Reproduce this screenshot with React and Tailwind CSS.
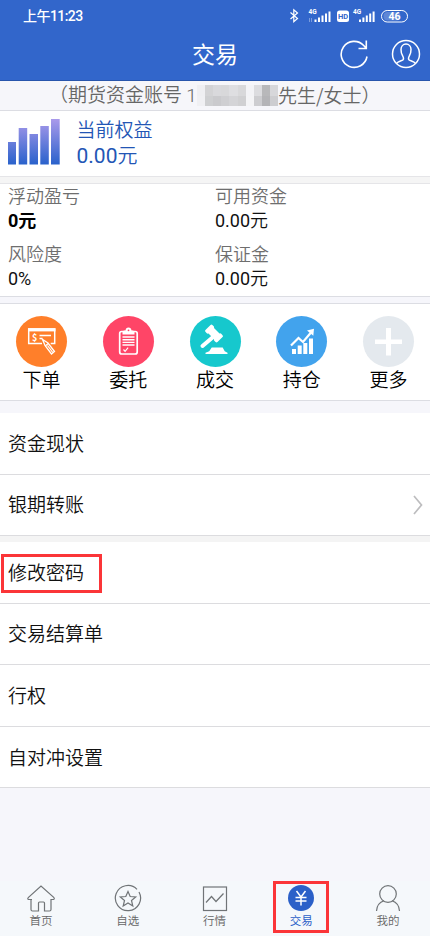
import React from "react";

function StatusBar() {
  return (
    <div className="flex h-[31px] items-center justify-between pl-[23px] pr-[21px] text-white">
      <span className="pb-px text-[14px] font-medium leading-none tracking-[-0.500px] whitespace-nowrap">上午<span className="font-[Roboto] text-[14px] tracking-[-0.600px]">11:23</span></span>
      <svg width="120" height="20" viewBox="0 0 120 20" fill="none" stroke="#fff">
        <path d="M1.500 6.500l7 6-3.700 3.200V3.800l3.700 3.200-7 6" strokeWidth="1.200" />
        <g stroke="none" fill="#fff">
          <path d="M25.500 13.500h2V16h-2zM29 11.500h2V16h-2zM32.500 9.500h2V16h-2zM36 7.500h2V16h-2zM39.500 5.500h2V16h-2z" />
          <path d="M70 13.500h2V16h-2zM73.400 11.500h2V16h-2zM76.800 9.500h2V16h-2zM80.200 7.500h2V16h-2zM83.600 5.500h2V16h-2z" />
          <rect x="48" y="4.500" width="12" height="11.500" rx="2.500" />
          <text x="19.500" y="7.500" fontSize="6.500" fontWeight="700" fontFamily="Roboto">4G</text>
          <text x="64" y="7.500" fontSize="6.500" fontWeight="700" fontFamily="Roboto">4G</text>
          <text x="49" y="13" fontSize="7.500" fontWeight="700" fontFamily="Roboto" fill="#3266cb">HD</text>
        </g>
        <path d="M20.500 12v4M22.500 12v4" strokeWidth=".7" opacity=".5" />
        <rect x="92.500" y="4.500" width="26" height="11.500" rx="5.700" />
        <rect x="94.500" y="6" width="17" height="8.500" rx="4" fill="#fff" opacity=".22" stroke="none" />
        <text x="99.500" y="14" fontSize="10.500" fontWeight="700" fontFamily="Roboto" fill="#fff" stroke="none">46</text>
      </svg>
    </div>
  );
}

function Header() {
  return (
    <header className="h-[81px] border-b border-[#2855ac] bg-[#3266cb]">
      <StatusBar />
      <div className="grid h-[48px] grid-cols-[1fr_auto_1fr] items-center text-white">
        <span />
        <h1 className="pb-[3px] text-[23px] font-normal leading-none">交易</h1>
        <div className="flex justify-end gap-[22px] pr-[9px] pb-[2px]">
          <svg width="30" height="30" viewBox="0 0 30 30" fill="none" stroke="#fff" strokeWidth="1.600">
            <path d="M28 17.500A13 13 0 1 1 24.700 6.500L27 9M27.300 1.500V9.500H19.500" />
          </svg>
          <svg width="30" height="30" viewBox="0 0 30 30" fill="none" stroke="#fff" strokeWidth="1.500">
            <circle cx="15" cy="15" r="13.500" />
            <path d="M5.500 24.500c1-2 5-2.500 6.500-3.700 1-1 .5-2.500-.5-4.300-1-1.500-1.500-3.500-1.500-6 0-3 2-5.500 5-5.500s5 2.500 5 5.500c0 2.500-.5 4.500-1.500 6-1 1.800-1.500 3.300-.5 4.300 1.500 1.200 5.500 1.700 6.500 3.700" />
          </svg>
        </div>
      </div>
    </header>
  );
}

const mosaic = [
  "#efeff2", "#d3d3d5", "#d9d9dc", "#d8d8da", "#dedee1", "#d8d8da", "#f3f3f6", "#dcdcdf", "#b8b8ba", "#d7d7da",
  "#f0f0f3", "#cecfd1", "#cacacd", "#cfcfd2", "#d4d4d7", "#d0d0d2", "#f4f4f6", "#cdcdd0", "#b4b4b7", "#cdcdd0",
];

function AccountBar() {
  return (
    <div className="flex h-[30px] items-center border-b border-[#dcdde3] bg-[#f6f6fa] pl-[49px] text-[19px] font-[350] leading-none text-[#666] whitespace-nowrap">
      <span className="w-[148px] pb-[2px]">（期货资金账号 <span className="font-[Roboto]">1</span></span>
      <div className="grid h-[21px] w-[81px] grid-cols-10 grid-rows-2">
        {mosaic.map((c, i) => (
          <i key={i} style={{ background: c }} />
        ))}
      </div>
      <span className="pb-[2px]">先生/女士）</span>
    </div>
  );
}

function Equity() {
  return (
    <section className="flex h-[65px] bg-white pl-[8px] pt-[8px]">
      <svg width="52" height="46" viewBox="0 0 52 46">
        <defs>
          <linearGradient id="bar" gradientUnits="userSpaceOnUse" x1="0" y1="0" x2="0" y2="46">
            <stop offset="0" stopColor="#aa9aeb" />
            <stop offset="1" stopColor="#2861cb" />
          </linearGradient>
        </defs>
        <path fill="url(#bar)" d="M0 23h8v22.500H0zM10.700 9h8.500v36.500h-8.500zM21.500 15h8.500v30.500h-8.500zM32.300 7h8.500v38.500h-8.500zM43 0h8.700v45.500H43z" />
      </svg>
      <div className="ml-[16.500px] text-[#2356b5]">
        <div className="mt-[-3px] text-[19px] font-[350] leading-[26px]">当前权益</div>
        <div className="mt-[-1px] text-[20px] font-[350] leading-[27px]"><span className="font-[Roboto] text-[21px] font-normal">0.00</span>元</div>
      </div>
    </section>
  );
}

function Stat({ label, children, bold }) {
  return (
    <div className="h-[58px]">
      <div className="-mt-[2px] text-[18px] font-[350] leading-[26px] text-[#6e6e6e]">{label}</div>
      <div className={bold ? "text-[18px] font-bold leading-[23px] text-black" : "text-[18px] leading-[23px] text-[#111]"}>{children}</div>
    </div>
  );
}

function Stats() {
  return (
    <section className="h-[113px] border-b border-[#dcdde3] bg-white pl-[8px]">
      <div className="grid grid-cols-[207px_1fr]">
        <Stat label="浮动盈亏" bold><span className="font-[Roboto]">0</span>元</Stat>
        <Stat label="可用资金"><span className="font-[Roboto]">0.00</span><span className="font-[350]">元</span></Stat>
        <Stat label="风险度"><span className="font-[Roboto]">0%</span></Stat>
        <Stat label="保证金"><span className="font-[Roboto]">0.00</span><span className="font-[350]">元</span></Stat>
      </div>
    </section>
  );
}

const actions = [
  {
    name: "下单",
    color: "bg-[#ff7f2a]",
    icon: (
      <g fill="none" stroke="#fff" strokeWidth="1.500">
        <path d="M26 27.500H12.700V13H38.700V27.500h-4" />
        <path d="M12 13.800h27.500" strokeWidth="3.200" />
        <path d="M23.500 19.500H35M23.500 22.500h3" />
        <path d="M26.500 23.500l2.500 6 6.500 8.500 3-2.500-6.500-8.500z" strokeWidth="1.300" />
        <path d="M29.200 30l3-2.500M31.500 29.500l5.300 7" strokeWidth="1.200" />
        <text x="16" y="24.500" fontSize="9" fontWeight="700" fill="#fff" stroke="none">$</text>
      </g>
    ),
  },
  {
    name: "委托",
    color: "bg-[#ff4567]",
    icon: (
      <g fill="none" stroke="#fff" strokeWidth="1.700">
        <rect x="16.700" y="15.500" width="17.500" height="22.500" rx="2" />
        <path fill="#fff" stroke="none" d="M19.500 18.500v-2.500q0-1.500 2-1.500h1q.3-3 3-3t3 3h1q2 0 2 1.500v2.500z" />
        <circle cx="25.500" cy="14.300" r=".9" fill="#ff4567" stroke="none" />
        <path d="M19.500 21h12M19.500 23.700h12M19.500 26.400h12M19.500 29h12" strokeWidth="1.400" />
        <path d="M20.500 33.500l1.600 1.800 3-3.600" strokeWidth="1.200" />
      </g>
    ),
  },
  {
    name: "成交",
    color: "bg-[#16c8cd]",
    icon: (
      <g fill="#fff">
        <g transform="rotate(45 24 17.500)">
          <rect x="15.500" y="12.600" width="4.500" height="9.800" rx="1.300" />
          <rect x="28" y="12.600" width="4.500" height="9.800" rx="1.300" />
          <rect x="18" y="13.600" width="12" height="7.800" />
        </g>
        <path d="M22.500 21.500L12.500 30" stroke="#fff" strokeWidth="4" strokeLinecap="round" />
        <path d="M21.700 31.500h11l2 3.800 2.800 1.400v1.300H15.500v-1.300l3.700-1.400z" />
      </g>
    ),
  },
  {
    name: "持仓",
    color: "bg-[#42a3ed]",
    icon: (
      <g fill="#fff">
        <path d="M16 33h4v5h-4zM21.700 29.500h4V38h-4zM27.300 27h4v11h-4zM33 22.500h4V38h-4z" />
        <path d="M15 29.500L22.500 22l4.500 4L35 16.500" fill="none" stroke="#fff" strokeWidth="2.200" />
        <path d="M31 14.500l7-1.700-.7 7z" />
      </g>
    ),
  },
  {
    name: "更多",
    color: "bg-[#e4e9ee]",
    icon: <path fill="#fff" d="M23 12h5v11.500h11v4.500H28v11.500h-5V28H12v-4.500h11z" />,
  },
];

function Actions() {
  return (
    <section className="mt-[6px] flex h-[98px] justify-between border-y border-[#dcdde3] bg-white px-[16px] pt-[12px]">
      {actions.map((a) => (
        <div key={a.name} className="flex w-[51px] flex-col items-center">
          <div className={"size-[51px] rounded-full " + a.color}>
            <svg width="51" height="51" viewBox="0 0 51 51">{a.icon}</svg>
          </div>
          <span className="text-[19px] font-[350] leading-[24px] text-black">{a.name}</span>
        </div>
      ))}
    </section>
  );
}

function Row({ children, arrow, boxed, last }) {
  return (
    <div className={"flex items-center justify-between border-[#dcdcdf] pr-[7px] text-[19px] font-[350] leading-none text-[#111] " + (last ? "h-[61px]" : "h-[61.500px] border-b")}>
      {boxed ? (
        <span className="ml-px mt-[2px] flex h-[39px] w-[101px] items-center border-[3px] border-[#fb3538] pb-[4px] pl-[4px]">{children}</span>
      ) : (
        <span className="pb-[2px] pl-[8px]">{children}</span>
      )}
      {arrow && (
        <svg width="10" height="20" viewBox="0 0 10 20" fill="none" stroke="#bdbdbf" strokeWidth="1.700">
          <path d="M1 1l7.500 9L1 19" />
        </svg>
      )}
    </div>
  );
}

const tabs = [
  { name: "首页", icon: <path d="M6 15.500H2.500Q1 15 2.500 13.300L15 2l12.700 11.300Q29 15 27.500 15.500H25V25.500q0 1.500-1.500 1.500H18.500V19q0-1-1-1h-4q-1 0-1 1v8H6.500Q5 27 5 25.500V15.500" /> },
  { name: "自选", icon: <><path d="M26 8A12.600 12.600 0 1 1 24 5.300" /><path d="M15 7.500l2.200 5 5.500.5-4.200 3.500 1.300 5.500-4.800-3-4.800 3 1.300-5.500L7.300 13l5.500-.5z" /></> },
  { name: "行情", icon: <><rect x="3.500" y="3" width="23" height="23.500" /><path d="M6 18.500l5.500-6 4.500 5 7.500-8" /></> },
  { name: "交易", icon: <><circle cx="15" cy="14" r="13" fill="#2b60c8" stroke="none" /><path d="M10.500 7l4.500 6 4.500-6M15 13v8.500M9.500 13.500h11M9.500 17h11" stroke="#fff" strokeWidth="1.500" /></>, active: true },
  { name: "我的", icon: <><circle cx="15" cy="10" r="8.300" /><path d="M3.500 27q.5-8 7.500-10.200M19 16.800q7 2.200 7.500 10.200" /></> },
];

function TabBar() {
  return (
    <nav className="flex h-[55px] items-start justify-between bg-[#f5f8fb] pr-[14px] pl-[13px]">
      {tabs.map((t) => (
        <div key={t.name} className={"flex h-[52px] w-[56px] flex-col items-center " + (t.active ? "border-[3px] border-[#fb3538] text-[#2b60c8]" : "pt-[3px] text-[#666]")}>
          <svg width="30" height="28" viewBox="0 0 30 28" className="shrink-0" fill="none" stroke="#707477" strokeWidth="1.200">{t.icon}</svg>
          <span className={"text-[11.500px] leading-[16px] " + (t.active ? "font-normal" : "font-[350]")}>{t.name}</span>
        </div>
      ))}
    </nav>
  );
}

export default function App() {
  return (
    <div className="flex h-[936px] w-[430px] flex-col overflow-hidden bg-[#f6f6fb] font-['Noto_Sans_CJK_SC',sans-serif]">
      <Header />
      <AccountBar />
      <Equity />
      <div className="h-[8px] border-y border-[#e5e5e8] bg-[#f5f5f5]" />
      <Stats />
      <Actions />
      <section className="mt-[12px] h-[123px] bg-white">
        <Row>资金现状</Row>
        <Row arrow>银期转账</Row>
      </section>
      <div className="h-[6px] bg-[#f4f4f4]" />
      <section className="h-[246px] border-b border-[#dcdcdf] bg-white">
        <Row boxed>修改密码</Row>
        <Row>交易结算单</Row>
        <Row>行权</Row>
        <Row last>自对冲设置</Row>
      </section>
      <div className="flex-1" />
      <TabBar />
    </div>
  );
}
